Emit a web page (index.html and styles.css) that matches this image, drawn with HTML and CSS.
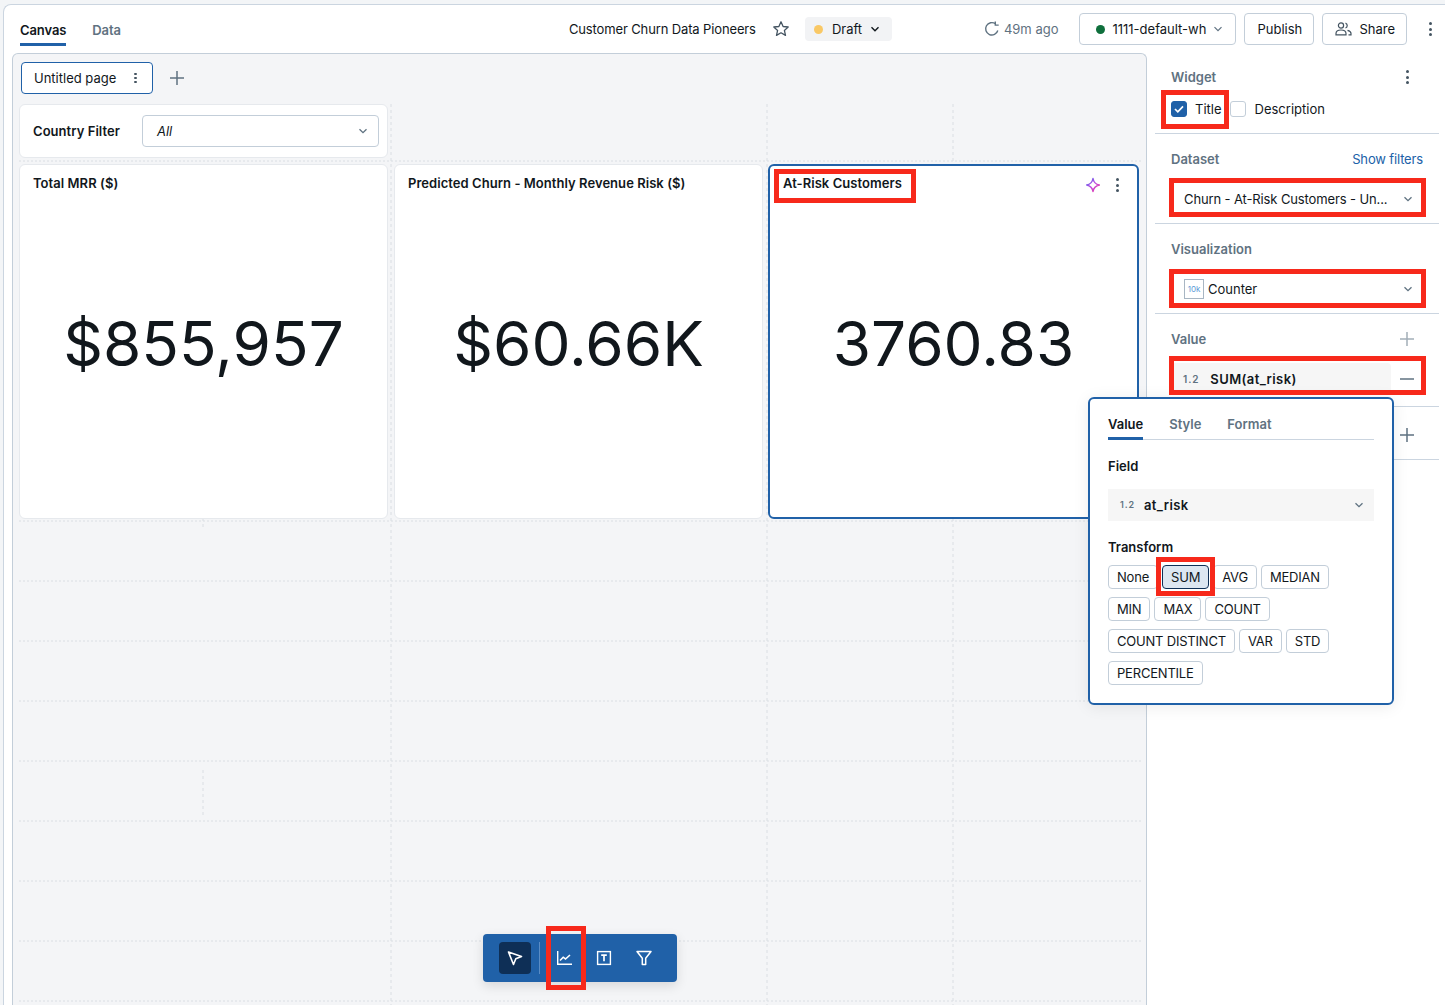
FILE: index.html
```html
<!DOCTYPE html>
<html lang="en">
<head>
    <meta charset="utf-8">
    <title>Customer Churn Data Pioneers</title>
    <link rel="stylesheet" href="styles.css">
</head>
<body>
    <div class="app">
        <header class="topbar">
            <nav class="tabs">
                <span class="tab tab--active">Canvas</span>
                <span class="tab">Data</span>
            </nav>
            <div class="doc-title">Customer Churn Data Pioneers</div>
            <svg class="star" width="18" height="18" viewBox="0 0 18 18"><path d="M9 1.800l2.100 4.700 5.100.5-3.800 3.400 1.100 5-4.500-2.600-4.500 2.600 1.100-5L1.800 7l5.100-.5z" fill="none" stroke="#445461" stroke-width="1.300" stroke-linejoin="round"/></svg>
            <div class="draft">
                <span class="dot dot--yellow"></span>
                <span>Draft</span>
                <svg class="chev" width="10" height="10" viewBox="0 0 10 10"><path d="M1.500 3.200L5 6.700l3.500-3.500" fill="none" stroke="#11171c" stroke-width="1.400"/></svg>
            </div>
            <div class="saved">
                <svg width="16" height="16" viewBox="0 0 16 16"><path d="M13.800 9.500A6.200 6.200 0 1 1 11.500 2.800" fill="none" stroke="#5f7281" stroke-width="1.400"/><path d="M11.300 .6v3.500h3.400" fill="none" stroke="#5f7281" stroke-width="1.400"/></svg>
                <span>49m ago</span>
            </div>
            <button class="btn btn--warehouse">
                <span class="dot dot--green"></span>
                <span>1111-default-wh</span>
                <svg class="chev" width="10" height="10" viewBox="0 0 10 10"><path d="M1.500 3.200L5 6.700l3.500-3.500" fill="none" stroke="#5f7281" stroke-width="1.200"/></svg>
            </button>
            <button class="btn btn--publish">Publish</button>
            <button class="btn btn--share">
                <svg width="17" height="14" viewBox="0 0 17 14"><circle cx="6" cy="3.500" r="2.600" fill="none" stroke="#445461" stroke-width="1.200"/><path d="M1 12.800v-1.300c0-2 2-3.500 5-3.500s5 1.500 5 3.500v1.300z" fill="none" stroke="#445461" stroke-width="1.200"/><path d="M10.500 1.100a2.600 2.600 0 0 1 0 4.900M12.500 8.300c2 .5 3.500 1.700 3.500 3.200v1.300h-2.500" fill="none" stroke="#445461" stroke-width="1.200"/></svg>
                <span>Share</span>
            </button>
            <div class="kebab kebab--top"><i></i><i></i><i></i></div>
        </header>

        <div class="main">
            <section class="canvas">
                <svg class="grid-lines" width="1133" height="952">
                    <g class="grid-lines__h">
                        <path d="M6 107H1130M6 467H1130M6 527H1130M6 587H1130M6 647H1130M6 707H1130M6 767H1130M6 827H1130M6 887H1130M6 947H1130"/>
                    </g>
                    <g class="grid-lines__v">
                        <path d="M378 50V952M754 50V952M940 50V110M940 464V952M190 464V474M190 716V762"/>
                    </g>
                </svg>

                <div class="pages">
                    <div class="page-tab">
                        <span>Untitled page</span>
                        <div class="kebab kebab--small"><i></i><i></i><i></i></div>
                    </div>
                    <svg class="page-add" width="16" height="16" viewBox="0 0 16 16"><path d="M8 1v14M1 8h14" stroke="#5f7281" stroke-width="1.500"/></svg>
                </div>

                <div class="widgets">
                    <div class="widget widget--filter">
                        <span class="widget__title">Country Filter</span>
                        <div class="filter-select">
                            <em>All</em>
                            <svg width="10" height="10" viewBox="0 0 10 10"><path d="M1.500 3.200L5 6.700l3.500-3.500" fill="none" stroke="#5f7281" stroke-width="1.300"/></svg>
                        </div>
                    </div>
                    <div class="widget widget--counter">
                        <span class="widget__title">Total MRR ($)</span>
                        <div class="counter">$855,957</div>
                    </div>
                    <div class="widget widget--counter">
                        <span class="widget__title">Predicted Churn - Monthly Revenue Risk ($)</span>
                        <div class="counter">$60.66K</div>
                    </div>
                    <div class="widget widget--counter widget--selected">
                        <span class="widget__title">At-Risk Customers</span>
                        <div class="widget__tools">
                            <svg width="16" height="16" viewBox="0 0 16 16">
                                <defs><linearGradient id="spark" x1="0" y1="0" x2="1" y2="1"><stop offset="0" stop-color="#4a6cf0"/><stop offset="0.500" stop-color="#c04ce0"/><stop offset="1" stop-color="#f0389a"/></linearGradient></defs>
                                <path d="M8 1.500c.6 3.700 2.400 5.700 6.300 6.500-3.900.8-5.700 2.800-6.300 6.500C7.400 10.800 5.600 8.800 1.700 8 5.600 7.200 7.400 5.200 8 1.500z" fill="none" stroke="url(#spark)" stroke-width="1.500" stroke-linejoin="round"/>
                            </svg>
                            <div class="kebab kebab--widget"><i></i><i></i><i></i></div>
                        </div>
                        <div class="counter">3760.83</div>
                    </div>
                </div>

                <div class="toolbar">
                    <span class="tool tool--active">
                        <svg width="18" height="18" viewBox="0 0 18 18"><path d="M2.500 3l13 4.500-5.700 2.300-2.300 5.700z" fill="none" stroke="#fff" stroke-width="1.600" stroke-linejoin="round"/></svg>
                    </span>
                    <span class="toolbar__sep"></span>
                    <span class="tool">
                        <svg width="18" height="18" viewBox="0 0 18 18"><path d="M2.700 2v13.300H17" fill="none" stroke="#fff" stroke-width="1.400"/><path d="M5 11.500l3.200-3.300 2.300 1.800 4.500-4" fill="none" stroke="#fff" stroke-width="1.600"/></svg>
                    </span>
                    <span class="tool">
                        <svg width="18" height="18" viewBox="0 0 18 18"><rect x="2.600" y="2.600" width="12.800" height="12.800" fill="none" stroke="#fff" stroke-width="1.400"/><path d="M6.200 6.200h5.600M9 6.200v6" fill="none" stroke="#fff" stroke-width="1.700"/></svg>
                    </span>
                    <span class="tool">
                        <svg width="18" height="18" viewBox="0 0 18 18"><path d="M2 2.500h14L10.700 9.300v6.200H7.300V9.300z" fill="none" stroke="#fff" stroke-width="1.500" stroke-linejoin="round"/></svg>
                    </span>
                </div>
            </section>

            <aside class="panel">
                <div class="section section--widget">
                    <div class="section__head">
                        <span>Widget</span>
                        <div class="kebab kebab--head"><i></i><i></i><i></i></div>
                    </div>
                    <div class="checks">
                        <span class="checkbox checkbox--on">
                            <svg width="10" height="8" viewBox="0 0 10 8"><path d="M1 4l2.800 2.800L9 1.300" fill="none" stroke="#fff" stroke-width="1.700"/></svg>
                        </span>
                        <span class="check-label">Title</span>
                        <span class="checkbox checkbox--desc"></span>
                        <span class="check-label check-label--desc">Description</span>
                    </div>
                </div>
                <div class="section">
                    <div class="section__head">
                        <span>Dataset</span>
                        <span class="link">Show filters</span>
                    </div>
                    <div class="panel-select">
                        <span class="panel-select__text">Churn - At-Risk Customers - Un...</span>
                        <svg width="10" height="10" viewBox="0 0 10 10"><path d="M1.500 3.200L5 6.700l3.500-3.500" fill="none" stroke="#5f7281" stroke-width="1.300"/></svg>
                    </div>
                </div>
                <div class="section">
                    <div class="section__head">
                        <span>Visualization</span>
                    </div>
                    <div class="panel-select">
                        <span class="viz-name"><span class="viz-icon">10k</span>Counter</span>
                        <svg width="10" height="10" viewBox="0 0 10 10"><path d="M1.500 3.200L5 6.700l3.500-3.500" fill="none" stroke="#5f7281" stroke-width="1.300"/></svg>
                    </div>
                </div>
                <div class="section section--value">
                    <div class="section__head">
                        <span>Value</span>
                        <svg class="row-icon" width="14" height="14" viewBox="0 0 14 14"><path d="M7 0v14M0 7h14" stroke="#a3aeb8" stroke-width="1.500"/></svg>
                    </div>
                    <div class="value-row">
                        <div class="field-pill">
                            <span class="type-tag">1.2</span>
                            <b>SUM(at_risk)</b>
                        </div>
                        <svg class="row-icon" width="14" height="14" viewBox="0 0 14 14"><path d="M0 7h14" stroke="#5f7281" stroke-width="1.500"/></svg>
                    </div>
                </div>
                <div class="section section--extra">
                    <svg width="14" height="14" viewBox="0 0 14 14"><path d="M7 0v14M0 7h14" stroke="#5f7281" stroke-width="1.500"/></svg>
                </div>
            </aside>
        </div>
    </div>

    <div class="popover">
        <div class="popover__tabs">
            <span class="pop-tab pop-tab--active">Value</span>
            <span class="pop-tab">Style</span>
            <span class="pop-tab">Format</span>
        </div>
        <div class="pop-label">Field</div>
        <div class="pop-field">
            <span class="pop-field__name"><span class="type-tag type-tag--small">1.2</span><b>at_risk</b></span>
            <svg width="10" height="10" viewBox="0 0 10 10"><path d="M1.500 3.200L5 6.700l3.500-3.500" fill="none" stroke="#5f7281" stroke-width="1.300"/></svg>
        </div>
        <div class="pop-label">Transform</div>
        <div class="chips">
            <span class="chip">None</span>
            <span class="chip chip--on">SUM</span>
            <span class="chip">AVG</span>
            <span class="chip">MEDIAN</span>
            <span class="chip">MIN</span>
            <span class="chip">MAX</span>
            <span class="chip">COUNT</span>
            <span class="chip">COUNT DISTINCT</span>
            <span class="chip">VAR</span>
            <span class="chip">STD</span>
            <span class="chip">PERCENTILE</span>
        </div>
    </div>

    <!-- red annotation boxes drawn on top of the screenshot -->
    <div class="mark mark--title"></div>
    <div class="mark mark--dataset"></div>
    <div class="mark mark--viz"></div>
    <div class="mark mark--value"></div>
    <div class="mark mark--widget"></div>
    <div class="mark mark--sum"></div>
    <div class="mark mark--chart"></div>
</body>
</html>
```

FILE: styles.css
```css
/* Base */
* {
    box-sizing: border-box;
}

html,
body {
    height: 1005px;
    overflow: hidden;
}

body {
    position: relative;
    margin: 0;
    background-color: #f3f5f7;
    color: #11171c;
    font-family: Inter, "Liberation Sans", sans-serif;
    font-size: 13px;
    line-height: 20px;
}

svg {
    display: block;
    flex: none;
}

.app {
    height: 1001px;
    margin: 4px 0 0 3px;
    background-color: #ffffff;
    border-top: 1px solid #cbd5e0;
    border-left: 1px solid #cbd5e0;
    border-top-left-radius: 8px;
    display: flex;
    flex-direction: column;
}

/* Top bar */
.topbar {
    height: 48px;
    display: flex;
    align-items: center;
    flex: none;
}

.tabs {
    display: flex;
    gap: 26px;
    margin-left: 16px;
    height: 100%;
}

.tab {
    color: #5f7281;
    font-weight: 600;
    letter-spacing: -0.1px;
    padding-top: 15px;
    height: 41px;
}

.tab--active {
    color: #11171c;
    border-bottom: 3px solid #2061a8;
}

.doc-title {
    width: 187px;
    margin-left: 448px;
    letter-spacing: -0.13px;
    white-space: nowrap;
}

.star {
    margin-left: 16px;
}

.draft {
    display: flex;
    align-items: center;
    width: 87px;
    height: 24px;
    margin-left: 15px;
    padding-left: 9px;
    background-color: #f2f3f5;
    border-radius: 4px;
}

.draft .chev {
    margin-left: 8px;
}

.dot {
    width: 9px;
    height: 9px;
    border-radius: 50%;
    margin-right: 9px;
}

.dot--yellow {
    background-color: #f9c865;
}

.dot--green {
    background-color: #0f6f3c;
}

.saved {
    display: flex;
    align-items: center;
    gap: 4px;
    margin-left: 92px;
    color: #5f7281;
}

.btn {
    height: 32px;
    display: flex;
    align-items: center;
    background-color: #ffffff;
    border: 1px solid #c3ced9;
    border-radius: 4px;
    color: #11171c;
    font: inherit;
    padding: 0 12px;
}

.btn--warehouse {
    width: 157px;
    margin-left: 21px;
    padding-left: 16px;
}

.btn--warehouse .dot {
    margin-right: 7px;
}

.btn--warehouse .chev {
    margin-left: 7px;
}

.btn--publish {
    width: 70px;
    margin-left: 8px;
}

.btn--share {
    width: 85px;
    margin-left: 8px;
    gap: 7px;
}

.kebab {
    display: flex;
    flex-direction: column;
    gap: 2.500px;
    width: 3px;
}

.kebab i {
    width: 3px;
    height: 3px;
    border-radius: 50%;
    background-color: #445461;
}

.kebab--top {
    margin-left: 22px;
}

.kebab--head {
    margin-right: 14px;
}

/* Canvas */
.main {
    flex: 1;
    display: flex;
    min-height: 0;
}

.canvas {
    position: relative;
    width: 1135px;
    margin-left: 8px;
    background-color: #f4f5f7;
    border: 1px solid #c3ced9;
    border-bottom: none;
    border-top-left-radius: 6px;
    border-top-right-radius: 6px;
}

.grid-lines {
    position: absolute;
    left: 0;
    top: 0;
}

.grid-lines path {
    fill: none;
    stroke: #dadee3;
    stroke-width: 1;
}

.grid-lines__h path {
    stroke-dasharray: 2 2;
}

.grid-lines__v path {
    stroke-dasharray: 3 3;
}

.pages {
    position: relative;
    display: flex;
    align-items: center;
    padding: 8px 0 0 8px;
}

.page-tab {
    display: flex;
    align-items: center;
    justify-content: space-between;
    width: 132px;
    height: 32px;
    padding: 0 15px 0 12px;
    background-color: #ffffff;
    border: 1px solid #2061a8;
    border-radius: 4px;
}

.page-add {
    margin-left: 16px;
}

.kebab--small {
    gap: 1.500px;
}

.kebab--small i {
    width: 2.500px;
    height: 2.500px;
}

.widgets {
    position: relative;
    display: grid;
    grid-template-columns: 369px 369px 371px;
    grid-template-rows: 54px 355px;
    column-gap: 6px;
    row-gap: 6px;
    margin: 10px 0 0 6px;
}

.widget {
    position: relative;
    background-color: #ffffff;
    border: 1px solid #e6e9ed;
    border-radius: 6px;
}

.widget__title {
    font-weight: 600;
    letter-spacing: 0.05px;
}

.widget--filter {
    grid-column: 1 / -1;
    width: 369px;
    display: flex;
    align-items: center;
    padding: 0 8px 0 13px;
}

.filter-select {
    display: flex;
    align-items: center;
    justify-content: space-between;
    width: 237px;
    height: 32px;
    margin-left: 22px;
    padding: 0 10px 0 14px;
    border: 1px solid #c3ced9;
    border-radius: 4px;
}

.widget--counter {
    display: flex;
    flex-direction: column;
    padding: 8px 13px;
}

.counter {
    position: absolute;
    left: 0;
    right: 0;
    top: 143px;
    text-align: center;
    font-size: 62px;
    line-height: 72px;
    font-weight: 400;
}

.widget--selected {
    margin: 0 1px 0 -1px;
    padding: 7px 13px;
    border: 2px solid #2061a8;
}

.widget--selected .counter {
    top: 142px;
}

.widget__tools {
    position: absolute;
    right: 18px;
    top: 11px;
    display: flex;
    align-items: center;
    gap: 15px;
}

/* Floating toolbar */
.toolbar {
    position: absolute;
    left: 470px;
    top: 880px;
    width: 194px;
    height: 48px;
    display: flex;
    align-items: center;
    padding-left: 16px;
    background-color: #2061a8;
    border-radius: 4px;
    box-shadow: 0 4px 12px rgba(0, 0, 0, 0.12);
}

.tool {
    width: 32px;
    height: 32px;
    display: flex;
    align-items: center;
    justify-content: center;
    border-radius: 4px;
    margin-right: 8px;
}

.tool--active {
    background-color: #0e2f56;
}

.toolbar__sep {
    width: 1px;
    height: 32px;
    background-color: #5a8cc4;
    margin-right: 8px;
}

/* Right panel */
.panel {
    flex: 1;
    padding: 0 6px 0 8px;
}

.section {
    height: 90px;
    padding: 15px 16px 0;
    border-bottom: 1px solid #cbd5e0;
}

.section--widget {
    height: 81px;
    padding-top: 14px;
}

.section--value {
    height: 93px;
}

.section--extra {
    height: 53px;
    padding: 21px 0 0 245px;
}

.section__head {
    display: flex;
    align-items: center;
    justify-content: space-between;
    height: 20px;
    color: #5f7281;
    font-weight: 600;
}

.row-icon {
    margin-right: 9px;
}

.link {
    color: #2061a8;
    font-weight: 400;
    letter-spacing: -0.15px;
}

.checks {
    display: flex;
    align-items: center;
    height: 20px;
    margin-top: 12px;
}

.checkbox {
    width: 16px;
    height: 16px;
    display: flex;
    align-items: center;
    justify-content: center;
    border: 1px solid #c3ced9;
    border-radius: 3px;
}

.checkbox--on {
    background-color: #2061a8;
    border-color: #2061a8;
}

.checkbox--desc {
    margin-left: 8px;
}

.check-label {
    margin-left: 8px;
}

.check-label--desc {
    margin-left: 9px;
}

.panel-select {
    display: flex;
    align-items: center;
    justify-content: space-between;
    height: 32px;
    margin-top: 14px;
    padding: 0 10px 0 13px;
}

.panel-select__text {
    letter-spacing: -0.12px;
}

.viz-name {
    display: flex;
    align-items: center;
}

.viz-icon {
    width: 20px;
    height: 20px;
    margin-right: 4px;
    border: 1px solid #a8b6c3;
    color: #5c9ad6;
    font-size: 8px;
    line-height: 18px;
    text-align: center;
}

.value-row {
    display: flex;
    align-items: center;
    justify-content: space-between;
    margin-top: 14px;
    height: 32px;
}

.field-pill {
    display: flex;
    align-items: center;
    width: 221px;
    height: 32px;
    margin-left: -1px;
    padding-left: 13px;
    background-color: #f6f6f6;
    border-radius: 4px;
}

.field-pill b,
.pop-field b {
    font-weight: 600;
    letter-spacing: 0.4px;
}

.type-tag {
    color: #5f7281;
    font-size: 10px;
    font-weight: 600;
    letter-spacing: 0.9px;
    margin-right: 11px;
}

.type-tag--small {
    font-size: 9px;
    margin-right: 9px;
}

/* Value popover */
.popover {
    position: absolute;
    left: 1088px;
    top: 397px;
    width: 306px;
    height: 308px;
    padding: 12px 18px;
    background-color: #ffffff;
    border: 2px solid #2061a8;
    border-radius: 6px;
    box-shadow: 0 2px 16px rgba(0, 0, 0, 0.08);
}

.popover__tabs {
    display: flex;
    gap: 26px;
    height: 29px;
    border-bottom: 1px solid #cbd5e0;
}

.pop-tab {
    color: #5f7281;
    font-weight: 600;
    height: 29px;
    padding-top: 3px;
}

.pop-tab--active {
    color: #11171c;
    border-bottom: 3px solid #2061a8;
}

.pop-label {
    font-weight: 600;
    margin-top: 16px;
}

.pop-field {
    display: flex;
    align-items: center;
    justify-content: space-between;
    height: 32px;
    margin-top: 13px;
    padding: 0 10px 0 12px;
    background-color: #f6f6f6;
}

.pop-field__name {
    display: flex;
    align-items: center;
}

.chips {
    display: flex;
    flex-wrap: wrap;
    gap: 8px 4px;
    margin-top: 8px;
    width: 240px;
}

.chip {
    height: 24px;
    padding: 0 8px;
    border: 1px solid #c3ced9;
    border-radius: 4px;
    letter-spacing: -0.2px;
    line-height: 22px;
    white-space: nowrap;
}

.chip--on {
    background-color: #dce6f1;
    border-color: #0e2f56;
}

/* Red annotation boxes */
.mark {
    position: absolute;
    border: 5px solid #f7291b;
}

.mark--title {
    left: 1161px;
    top: 90px;
    width: 68px;
    height: 39px;
}

.mark--dataset {
    left: 1169px;
    top: 178px;
    width: 257px;
    height: 39px;
}

.mark--viz {
    left: 1169px;
    top: 269px;
    width: 257px;
    height: 39px;
}

.mark--value {
    left: 1169px;
    top: 356px;
    width: 257px;
    height: 39px;
}

.mark--widget {
    left: 774px;
    top: 169px;
    width: 142px;
    height: 34px;
}

.mark--sum {
    left: 1156px;
    top: 557px;
    width: 59px;
    height: 39px;
}

.mark--chart {
    left: 546px;
    top: 926px;
    width: 40px;
    height: 64px;
}
```
